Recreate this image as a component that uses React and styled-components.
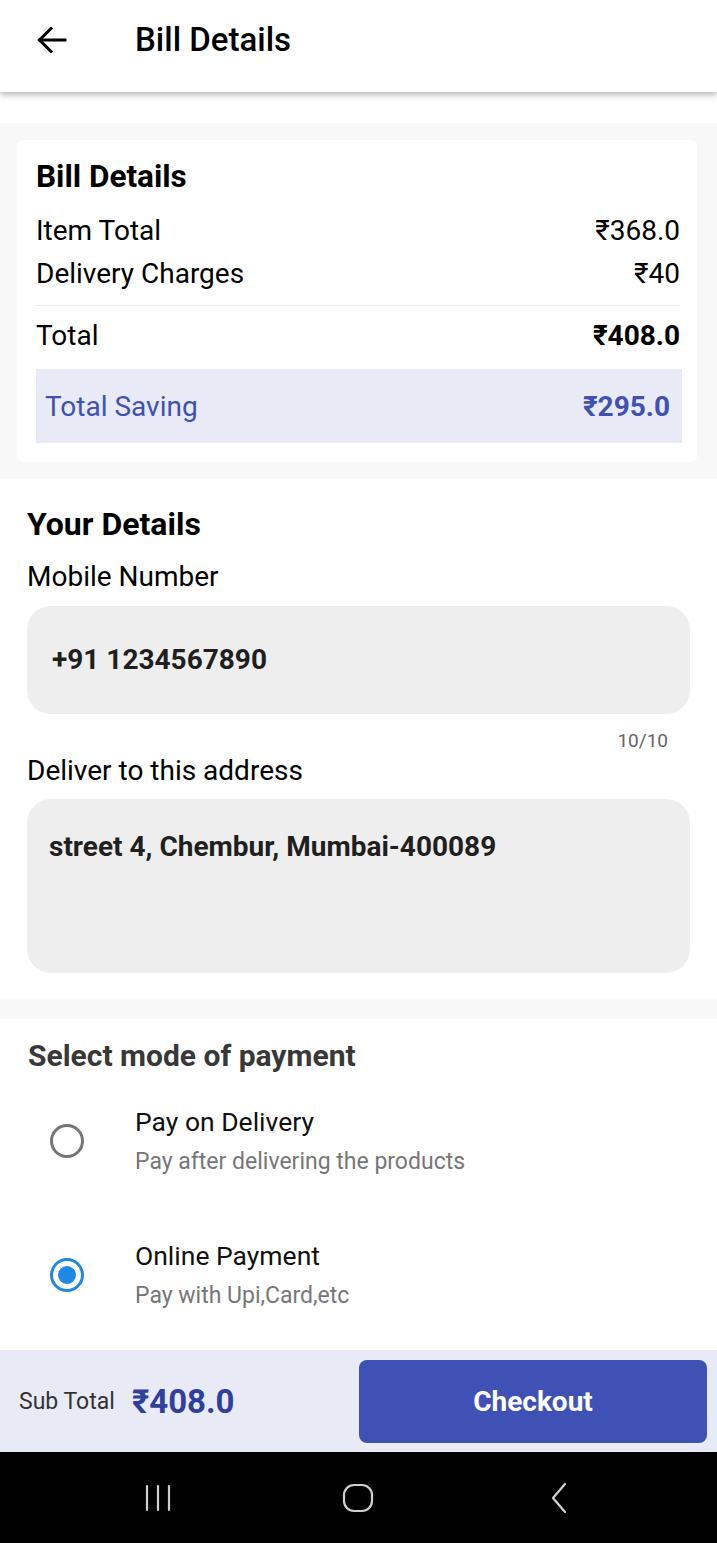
import React, { useState } from 'react';
import styled, { createGlobalStyle } from 'styled-components';

const GlobalStyle = createGlobalStyle`
  * { box-sizing: border-box; }
  body {
    margin: 0;
    background: #fff;
    font-family: Roboto, "Noto Sans", "DejaVu Sans", sans-serif;
    color: #000;
  }
`;

const Screen = styled.div`
  width: 717px;
  height: 1543px;
  display: flex;
  flex-direction: column;
  background: #fff;
  overflow: hidden;
`;

const Header = styled.header`
  position: relative;
  z-index: 2;
  height: 92px;
  flex-shrink: 0;
  background: #fff;
  display: flex;
  align-items: flex-start;
  padding: 20px 0 0 37px;
  box-shadow: 0 3px 6px rgba(0, 0, 0, 0.28);
  margin-bottom: 31px;
`;

const BackButton = styled.button`
  border: none;
  background: none;
  padding: 0;
  width: 30px;
  height: 40px;
  display: flex;
  align-items: center;
  cursor: pointer;
`;

const HeaderTitle = styled.h1`
  margin: 0 0 0 68px;
  font-size: 33px;
  font-weight: 500;
  line-height: 40px;
`;

const GraySection = styled.section`
  background: #f8f8f8;
  padding: 17px 20px 17px 17px;
`;

const Card = styled.div`
  background: #fff;
  border-radius: 6px;
  padding: 18px 15px 19px 19px;
`;

const CardTitle = styled.h2`
  margin: 0 0 13px;
  font-size: 31.5px;
  font-weight: 700;
  line-height: 38px;
`;

const Row = styled.div`
  display: flex;
  justify-content: space-between;
  align-items: center;
  padding-right: 2px;
  font-size: 28px;
  line-height: 43px;
`;

const Amount = styled.span`
  font-weight: ${p => (p.$bold ? 700 : 400)};
`;

const Divider = styled.div`
  height: 1px;
  background: #ececec;
  margin: 10px 2px 8px 0;
`;

const SavingBox = styled.div`
  margin-top: 12px;
  height: 74px;
  background: #e8eaf6;
  color: #3f51b5;
  display: flex;
  justify-content: space-between;
  align-items: center;
  padding: 0 12px 0 9px;
  font-size: 28px;
`;

const DetailsSection = styled.section`
  padding: 25px 27px 26px 27px;
`;

const SectionTitle = styled.h2`
  margin: 0 0 15px;
  font-size: 32px;
  font-weight: 700;
  line-height: 40px;
`;

const FieldLabel = styled.div`
  font-size: 28px;
  line-height: 36px;
  margin-bottom: ${p => p.$gap}px;
`;

const InputBox = styled.div`
  background: #eeeeee;
  border-radius: 24px;
  height: ${p => p.$height}px;
  display: flex;
  align-items: ${p => (p.$multiline ? 'flex-start' : 'center')};
  padding: ${p => (p.$multiline ? '30px 22px' : '0 25px')};
  font-size: 28px;
  font-weight: 700;
  line-height: 36px;
  color: #1f1f1f;
`;

const Counter = styled.div`
  text-align: right;
  padding-right: 22px;
  margin-top: 15px;
  font-size: 19px;
  line-height: 24px;
  color: #666;
`;

const Band = styled.div`
  height: 20px;
  background: #f8f8f8;
  flex-shrink: 0;
`;

const PaymentSection = styled.section`
  padding: 19px 0 8px 28px;
`;

const PaymentTitle = styled.h2`
  margin: 0;
  font-size: 30px;
  font-weight: 700;
  line-height: 36px;
  color: #383838;
`;

const Option = styled.label`
  display: flex;
  align-items: center;
  padding: 30px 0;
  cursor: pointer;
`;

const RadioRing = styled.span`
  width: 34px;
  height: 34px;
  border-radius: 50%;
  border: 3px solid ${p => (p.$checked ? '#1e88e5' : '#757575')};
  margin-left: 22px;
  margin-right: 51px;
  display: flex;
  align-items: center;
  justify-content: center;
  flex-shrink: 0;
`;

const RadioDot = styled.span`
  width: 18px;
  height: 18px;
  border-radius: 50%;
  background: #1e88e5;
`;

const OptionText = styled.div`
  display: flex;
  flex-direction: column;
  gap: 6px;
`;

const OptionTitle = styled.span`
  font-size: 26.5px;
  line-height: 36px;
  color: #111;
`;

const OptionSub = styled.span`
  font-size: 23px;
  line-height: 32px;
  color: #777;
`;

const Spacer = styled.div`
  flex: 1;
`;

const BottomBar = styled.footer`
  height: 102px;
  flex-shrink: 0;
  background: #e8eaf6;
  display: flex;
  align-items: center;
  padding: 0 10px 0 19px;
`;

const SubLabel = styled.span`
  font-size: 23px;
  color: #333;
  margin-right: 17px;
`;

const SubValue = styled.span`
  font-size: 33px;
  font-weight: 700;
  color: #303f9f;
`;

const CheckoutButton = styled.button`
  margin-left: auto;
  width: 348px;
  height: 83px;
  border: none;
  border-radius: 8px;
  background: #3f51b5;
  color: #fff;
  font-family: inherit;
  font-size: 28px;
  font-weight: 700;
  cursor: pointer;
`;

const NavBar = styled.nav`
  height: 91px;
  flex-shrink: 0;
  background: #000;
  display: grid;
  grid-template-columns: repeat(3, 1fr);
  align-items: center;
  justify-items: center;
  padding: 0 58px;
`;

const BackArrow = () => (
  <svg width="30" height="28" viewBox="0 0 30 28" fill="none" stroke="#000" strokeWidth="3" strokeLinecap="square">
    <path d="M3 14h25" />
    <path d="M14 2.5L2.5 14 14 25.5" />
  </svg>
);

const options = [
  { id: 'cod', title: 'Pay on Delivery', sub: 'Pay after delivering the products' },
  { id: 'online', title: 'Online Payment', sub: 'Pay with Upi,Card,etc' },
];

export default function App() {
  const [mode, setMode] = useState('online');

  return (
    <Screen>
      <GlobalStyle />
      <Header>
        <BackButton aria-label="Back">
          <BackArrow />
        </BackButton>
        <HeaderTitle>Bill Details</HeaderTitle>
      </Header>

      <GraySection>
        <Card>
          <CardTitle>Bill Details</CardTitle>
          <Row>
            <span>Item Total</span>
            <Amount>₹368.0</Amount>
          </Row>
          <Row>
            <span>Delivery Charges</span>
            <Amount>₹40</Amount>
          </Row>
          <Divider />
          <Row>
            <span>Total</span>
            <Amount $bold>₹408.0</Amount>
          </Row>
          <SavingBox>
            <span>Total Saving</span>
            <Amount $bold>₹295.0</Amount>
          </SavingBox>
        </Card>
      </GraySection>

      <DetailsSection>
        <SectionTitle>Your Details</SectionTitle>
        <FieldLabel $gap={11}>Mobile Number</FieldLabel>
        <InputBox $height={108}>+91 1234567890</InputBox>
        <Counter>10/10</Counter>
        <FieldLabel $gap={10}>Deliver to this address</FieldLabel>
        <InputBox $height={174} $multiline>street 4, Chembur, Mumbai-400089</InputBox>
      </DetailsSection>

      <Band />

      <PaymentSection>
        <PaymentTitle>Select mode of payment</PaymentTitle>
        {options.map(o => (
          <Option key={o.id} onClick={() => setMode(o.id)}>
            <RadioRing $checked={mode === o.id}>
              {mode === o.id && <RadioDot />}
            </RadioRing>
            <OptionText>
              <OptionTitle>{o.title}</OptionTitle>
              <OptionSub>{o.sub}</OptionSub>
            </OptionText>
          </Option>
        ))}
      </PaymentSection>

      <Spacer />

      <BottomBar>
        <SubLabel>Sub Total</SubLabel>
        <SubValue>₹408.0</SubValue>
        <CheckoutButton>Checkout</CheckoutButton>
      </BottomBar>

      <NavBar>
        <svg width="30" height="28" viewBox="0 0 30 28" stroke="#cfcfcf" strokeWidth="2.2" strokeLinecap="round">
          <path d="M4 2v24M15 2v24M26 2v24" />
        </svg>
        <svg width="32" height="30" viewBox="0 0 32 30" fill="none" stroke="#cfcfcf" strokeWidth="2.2">
          <rect x="2" y="2" width="28" height="26" rx="10" />
        </svg>
        <svg width="18" height="32" viewBox="0 0 18 32" fill="none" stroke="#cfcfcf" strokeWidth="2.2" strokeLinecap="round" strokeLinejoin="round">
          <path d="M15 2L3 16l12 14" />
        </svg>
      </NavBar>
    </Screen>
  );
}
